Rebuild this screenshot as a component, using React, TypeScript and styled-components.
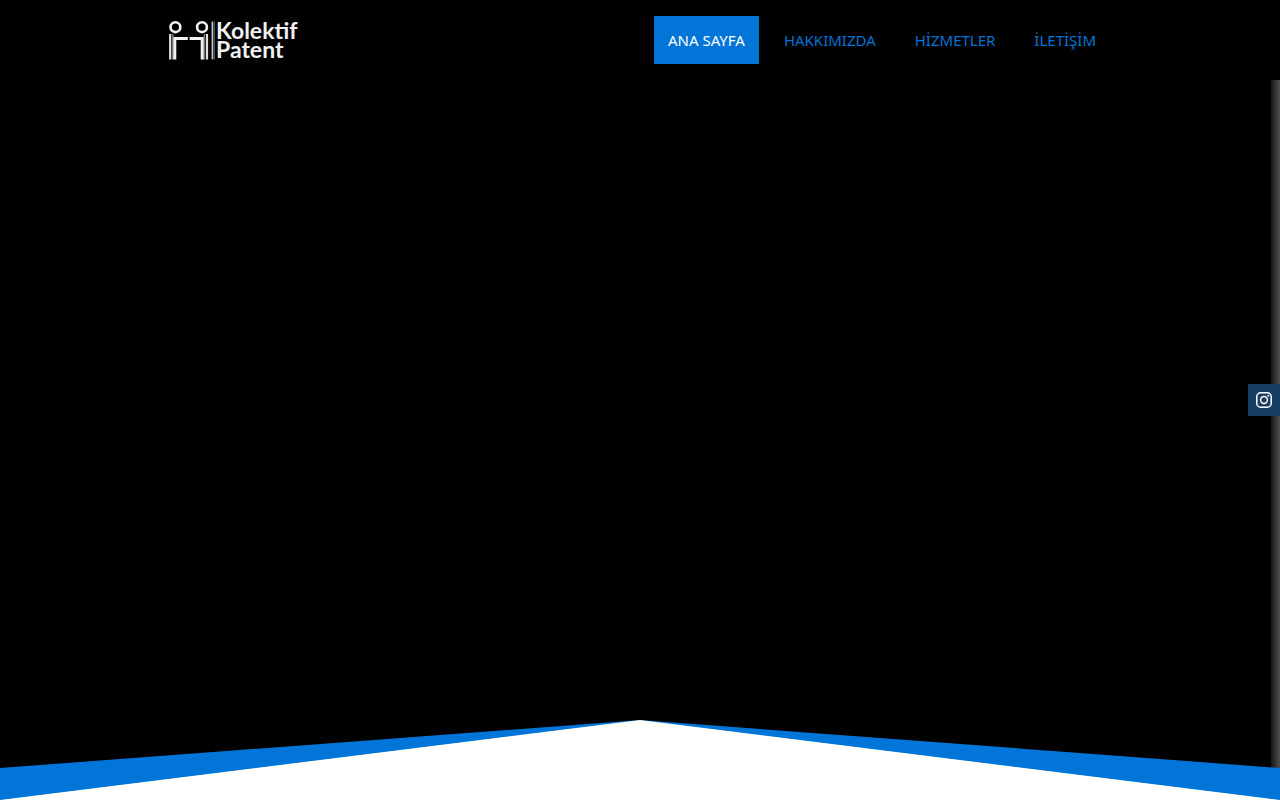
import React from "react";
import styled, { createGlobalStyle } from "styled-components";

const GlobalStyle = createGlobalStyle`
  * { box-sizing: border-box; }
  body {
    margin: 0;
    background: #000;
    font-family: "Noto Sans", sans-serif;
  }
`;

const Page = styled.div`
  min-height: 100vh;
  display: flex;
  flex-direction: column;
  background: #000;
`;

const Header = styled.header`
  background: #000;
`;

const HeaderInner = styled.div`
  max-width: 960px;
  height: 80px;
  margin: 0 auto;
  padding: 0 10px 0 8px;
  display: flex;
  align-items: center;
  justify-content: space-between;
`;

const LogoLink = styled.a`
  display: block;
  svg { display: block; }
`;

const Nav = styled.nav`
  display: flex;
  gap: 11px;
`;

const NavLink = styled.a<{ $active?: boolean }>`
  padding: 0 14px;
  font-size: 15px;
  line-height: 48px;
  white-space: nowrap;
  text-decoration: none;
  color: ${(p) => (p.$active ? "#fff" : "#0275d8")};
  background: ${(p) => (p.$active ? "#0275d8" : "transparent")};
`;

const Hero = styled.main`
  flex: 1;
  display: flex;
  flex-direction: column;
  justify-content: flex-end;
  background: linear-gradient(to right, #181818, #262626 30%, #505050) right / 9px 100% no-repeat #000;
`;

const Divider = styled.svg`
  display: block;
  width: 100%;
  height: 80px;
`;

const SocialLink = styled.a`
  position: fixed;
  right: 0;
  top: calc(50% - 16px);
  width: 32px;
  height: 32px;
  display: flex;
  align-items: center;
  justify-content: center;
  background: #173f66;
  color: #fff;
`;

const links = ["ANA SAYFA", "HAKKIMIZDA", "HİZMETLER", "İLETİŞİM"];

function Logo() {
  return (
    <svg width="132" height="48" viewBox="0 0 132 48" role="img" aria-label="Kolektif Patent">
      <g fill="none" stroke="#f2f2f2">
        <circle cx="7.4" cy="11.2" r="4.9" strokeWidth="2.6" />
        <circle cx="34" cy="11.2" r="4.9" strokeWidth="2.6" />
        <path d="M2.2 18V43.4M39 18V43.4" stroke="#e0e0e0" strokeWidth="2.2" />
        <path d="M4.8 18V43.4M36.4 18V43.4" stroke="#777" strokeWidth="1.6" />
        <path d="M6.8 43.4V22.6H19.8M21.6 22.6H34.2V43.4" strokeWidth="3" />
        <path d="M44.4 5.5V43.4" stroke="#c8c8c8" strokeWidth="1.6" />
        <path d="M46.2 5.5V43.4" stroke="#777" strokeWidth="1" />
      </g>
      <g fill="#f0f0f0" fontFamily="Lato, sans-serif" fontWeight="700" fontSize="23">
        <text x="48" y="23">Kolektif</text>
        <text x="48" y="42">Patent</text>
      </g>
    </svg>
  );
}

function InstagramIcon() {
  return (
    <svg width="16" height="16" viewBox="0 0 16 16" fill="none" stroke="currentColor" strokeWidth="1.5" aria-hidden="true">
      <rect x="0.75" y="0.75" width="14.5" height="14.5" rx="4" />
      <circle cx="8" cy="8" r="3.4" />
      <circle cx="12.3" cy="3.7" r="1" fill="currentColor" stroke="none" />
    </svg>
  );
}

export default function App() {
  return (
    <>
      <GlobalStyle />
      <Page>
        <Header>
          <HeaderInner>
            <LogoLink href="#"><Logo /></LogoLink>
            <Nav>
              {links.map((label, i) => (
                <NavLink key={label} href="#" $active={i === 0}>{label}</NavLink>
              ))}
            </Nav>
          </HeaderInner>
        </Header>
        <Hero>
          <Divider viewBox="0 0 1280 80" preserveAspectRatio="none" aria-hidden="true">
            <polygon points="0,48 640,0 1280,48 1280,80 0,80" fill="#0275d8" />
            <polygon points="0,80 640,0 1280,80" fill="#fff" />
          </Divider>
        </Hero>
      </Page>
      <SocialLink href="#" aria-label="Instagram"><InstagramIcon /></SocialLink>
    </>
  );
}
